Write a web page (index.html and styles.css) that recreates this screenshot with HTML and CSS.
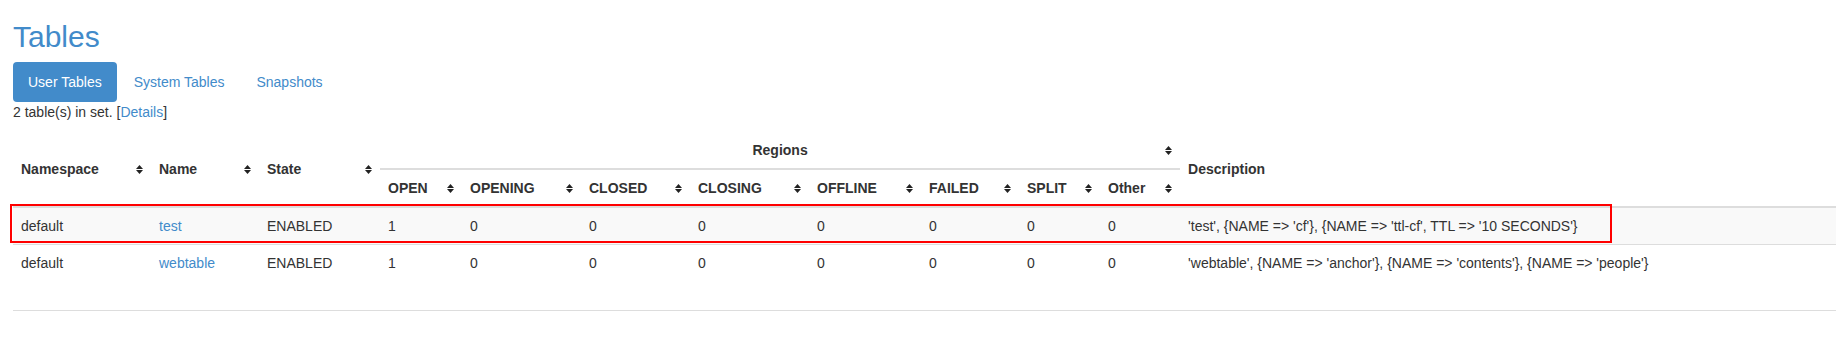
FILE: index.html
```html
<!DOCTYPE html>
<html><head>
<meta charset="utf-8">
<title>Tables</title>
<link rel="stylesheet" href="styles.css">
</head><body>
<div class="page">
    <h2>Tables</h2>
    <ul class="nav">
        <li class="active"><a href="#tab_userTables">User Tables</a></li>
        <li><a href="#tab_catalogTables">System Tables</a></li>
        <li><a href="#tab_userSnapshots">Snapshots</a></li>
    </ul>
    <p class="count">2 table(s) in set. [<a href="#">Details</a>]</p>

    <table class="table">
        <colgroup>
            <col class="w-ns"><col class="w-name"><col class="w-state">
            <col class="w-open"><col class="w-opening"><col class="w-closed"><col class="w-closing">
            <col class="w-offline"><col class="w-failed"><col class="w-split"><col class="w-other">
            <col>
        </colgroup>
        <thead>
            <tr>
                <th rowspan="2" class="sort">Namespace</th>
                <th rowspan="2" class="sort">Name</th>
                <th rowspan="2" class="sort">State</th>
                <th colspan="8" class="sort regions">Regions</th>
                <th rowspan="2">Description</th>
            </tr>
            <tr>
                <th class="sort">OPEN</th>
                <th class="sort">OPENING</th>
                <th class="sort">CLOSED</th>
                <th class="sort">CLOSING</th>
                <th class="sort">OFFLINE</th>
                <th class="sort">FAILED</th>
                <th class="sort">SPLIT</th>
                <th class="sort">Other</th>
            </tr>
        </thead>
        <tbody>
            <tr class="odd">
                <td>default</td>
                <td><a href="#">test</a></td>
                <td>ENABLED</td>
                <td>1</td><td>0</td><td>0</td><td>0</td><td>0</td><td>0</td><td>0</td><td>0</td>
                <td>'test', {NAME =&gt; 'cf'}, {NAME =&gt; 'ttl-cf', TTL =&gt; '10 SECONDS'}</td>
            </tr>
            <tr class="tall">
                <td>default</td>
                <td><a href="#">webtable</a></td>
                <td>ENABLED</td>
                <td>1</td><td>0</td><td>0</td><td>0</td><td>0</td><td>0</td><td>0</td><td>0</td>
                <td>'webtable', {NAME =&gt; 'anchor'}, {NAME =&gt; 'contents'}, {NAME =&gt; 'people'}</td>
            </tr>
        </tbody>
    </table>
</div>
<div class="mark"></div>
</body></html>
```

FILE: styles.css
```css
body{margin:0;padding:0;position:relative;font-family:"Liberation Sans",Arial,sans-serif;font-size:14px;line-height:20px;color:#333;background:#fff;}
a{color:#428bca;text-decoration:none;}
.page{padding:0 0 0 13px;}

h2{margin:20px 0 9px;font-size:30px;font-weight:normal;line-height:33px;color:#428bca;}

.nav{display:flex;margin:0;padding:0;list-style:none;}
.nav li + li{margin-left:2px;}
.nav a{display:block;padding:10px 15px;line-height:20px;border-radius:4px;}
.nav .active a{background:#428bca;color:#fff;}

.count{margin:0 0 10px;}

/* table, bootstrap-ish */
.table{width:100%;table-layout:fixed;border-collapse:collapse;border-spacing:0;border-bottom:1px solid #ddd;}
.table th, .table td{padding:8px;line-height:20px;text-align:left;white-space:nowrap;overflow:hidden;}
.table th{font-weight:bold;vertical-align:middle;border-bottom:2px solid #ddd;}
.table td{vertical-align:top;border-top:1px solid #ddd;}
.table th.regions{text-align:center;}
.table .odd td{background:#f9f9f9;}
.table .tall td{padding-bottom:37px;}

.sort{background:url("data:image/svg+xml,%3Csvg xmlns='http://www.w3.org/2000/svg' width='7' height='9'%3E%3Cpath d='M0 4 3.5 0 7 4zM0 5 3.5 9 7 5z' fill='%23222'/%3E%3C/svg%3E") no-repeat right 8px center;}

.w-ns{width:138px;}
.w-name{width:108px;}
.w-state{width:121px;}
.w-open{width:82px;}
.w-opening{width:119px;}
.w-closed{width:109px;}
.w-closing{width:119px;}
.w-offline{width:112px;}
.w-failed{width:98px;}
.w-split{width:81px;}
.w-other{width:80px;}

/* red highlight drawn over the first row */
.mark{position:absolute;left:10px;top:204px;width:1598px;height:35px;border:2px solid #f00;}
```
